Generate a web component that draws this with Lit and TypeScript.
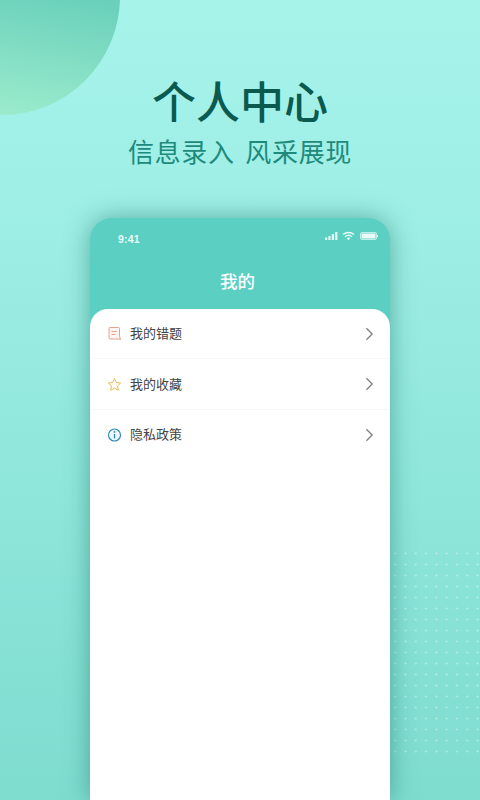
import { LitElement, html, css, svg } from "lit";
import { customElement } from "lit/decorators.js";

const chevron = html`<svg class="chev" viewBox="0 0 10 16"><path d="M1.500 1.500 L8 8 L1.500 14.500" fill="none" stroke="#808080" stroke-width="1.500"/></svg>`;

const ROWS = [
  {
    label: "我的错题",
    icon: svg`<path d="M3 1.500h8.500a1 1 0 0 1 1 1v7.500l1 3.500-2-.5H3a1 1 0 0 1-1-1V2.500a1 1 0 0 1 1-1z" fill="#fdf5f1" stroke="#e6a28d" stroke-width="1"/><path d="M4.500 5.500h5.500M4.500 8.500h4" stroke="#e6a28d" stroke-width="1" fill="none"/>`,
  },
  {
    label: "我的收藏",
    icon: svg`<path d="M7.500 1.500l1.900 4 4.300.5-3.200 3 .9 4.300-3.900-2.200-3.900 2.200.9-4.300-3.200-3 4.300-.5z" fill="#fef9ec" stroke="#e9bd62" stroke-width="1" stroke-linejoin="round"/>`,
  },
  {
    label: "隐私政策",
    icon: svg`<circle cx="7.500" cy="8" r="6" fill="#eef8fc" stroke="#2c86b8" stroke-width="1.100"/><path d="M7.500 7v4.500" stroke="#2c86b8" stroke-width="1.300"/><circle cx="7.500" cy="4.900" r=".9" fill="#2c86b8"/>`,
  },
];

@customElement("app-root")
export class AppRoot extends LitElement {
  static styles = css`
    :host {
      display: block;
      width: 480px;
      height: 800px;
      overflow: hidden;
      font-family: "Noto Sans CJK SC", "Liberation Sans", sans-serif;
    }
    .page {
      position: relative;
      height: 800px;
      overflow: hidden;
      box-sizing: border-box;
      padding-top: 70px;
      display: flex;
      flex-direction: column;
      align-items: center;
      background: linear-gradient(180deg, #a6f3ea 0%, #9fefe6 25%, #7edccf 100%);
    }
    .blob {
      position: absolute;
      left: -116px;
      top: -122px;
      width: 236px;
      height: 237px;
      border-radius: 50%;
      background: linear-gradient(190deg, #64cdb9 40%, #a3f0cf 100%);
    }
    .dots {
      position: absolute;
      left: 390px;
      top: 548px;
      width: 90px;
      height: 212px;
      background-image: radial-gradient(circle, rgba(255, 255, 255, 0.3) 0.9px, transparent 1.3px);
      background-size: 10.300px 11px;
    }
    .title {
      position: relative;
      margin: 0;
      font-size: 44px;
      line-height: 60px;
      font-weight: 500;
      color: #0b5a50;
    }
    .sub {
      position: relative;
      margin: 2px 0 0;
      font-size: 26px;
      line-height: 38px;
      font-weight: 400;
      color: #1f8a7c;
      letter-spacing: 0.7px;
      word-spacing: 4px;
    }
    .phone {
      position: relative;
      margin-top: 48px;
      width: 300px;
      flex: 1;
      background: #5ccfc3;
      border-radius: 22px 22px 0 0;
      box-shadow: 0 0 24px rgba(20, 110, 100, 0.5);
      display: flex;
      flex-direction: column;
    }
    .status {
      height: 40px;
      padding: 0 11px 0 28px;
      display: flex;
      justify-content: space-between;
      color: #e8fbf8;
      font-size: 10.500px;
      font-family: "Liberation Sans", sans-serif;
    }
    .status span {
      padding-top: 14px;
      line-height: 14px;
      font-weight: 700;
      letter-spacing: 0.2px;
    }
    .status svg {
      display: block;
      width: 54px;
      height: 10px;
      margin-top: 13px;
    }
    .nav {
      height: 51px;
      display: flex;
      align-items: center;
      justify-content: center;
      color: #fff;
      font-size: 17.500px;
      font-weight: 500;
      box-sizing: border-box;
      padding: 0 5px 6px 0;
    }
    .card {
      flex: 1;
      background: #fff;
      border-radius: 18px 18px 0 0;
    }
    .row {
      height: 50.400px;
      box-sizing: border-box;
      display: flex;
      align-items: center;
      padding: 0 16px 0 17px;
      border-bottom: 1px solid #f8f8f8;
      font-size: 13px;
      color: #444;
    }
    .row:last-child {
      border-bottom: none;
    }
    .icon {
      width: 15px;
      height: 15px;
      margin-right: 8px;
    }
    .label {
      flex: 1;
      margin-bottom: 2px;
    }
    .chev {
      width: 9px;
      height: 14px;
    }
  `;

  render() {
    return html`
      <div class="page">
        <div class="blob"></div>
        <div class="dots"></div>
        <h1 class="title">个人中心</h1>
        <p class="sub">信息录入 风采展现</p>
        <div class="phone">
          <div class="status">
            <span>9:41</span>
            <svg viewBox="0 0 54 10">
              <rect x="0" y="6.500" width="2.200" height="2.500" fill="#e8fbf8"/>
              <rect x="3.400" y="5" width="2.200" height="4" fill="#e8fbf8"/>
              <rect x="6.800" y="3" width="2.200" height="6" fill="#e8fbf8"/>
              <rect x="10.200" y="1" width="2.200" height="8" fill="#e8fbf8"/>
              <path d="M18 3.500a8.500 8.500 0 0 1 11 0M20 5.700a5.500 5.500 0 0 1 7 0" fill="none" stroke="#e8fbf8" stroke-width="1.400"/>
              <path d="M21.700 7.200a2.800 2.800 0 0 1 3.600 0L23.500 9.200z" fill="#e8fbf8"/>
              <rect x="35.500" y="1.500" width="16" height="7" rx="1.500" fill="none" stroke="#e8fbf8" stroke-width=".7"/>
              <rect x="36.500" y="2.500" width="14" height="5" rx=".7" fill="#e8fbf8"/>
              <rect x="52" y="4" width="1" height="2.200" fill="#e8fbf8"/>
            </svg>
          </div>
          <div class="nav">我的</div>
          <div class="card">
            ${ROWS.map(
              (r) => html`<div class="row">
                <svg class="icon" viewBox="0 0 15 15">${r.icon}</svg>
                <span class="label">${r.label}</span>
                ${chevron}
              </div>`
            )}
          </div>
        </div>
      </div>
    `;
  }
}
